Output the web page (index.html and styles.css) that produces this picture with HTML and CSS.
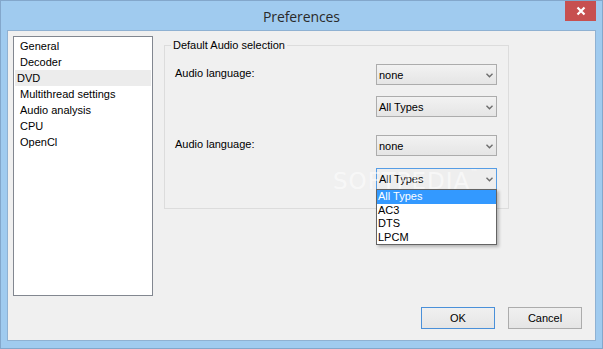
FILE: index.html
```html
<!DOCTYPE html>
<html>
<head>
<meta charset="utf-8">
<link rel="stylesheet" href="styles.css">
</head>
<body>
<div class="window">
  <div class="titlebar">
    <div class="title">Preferences</div>
    <div class="close">
      <svg width="10" height="10" viewBox="0 0 10 10"><path d="M1.5 1.5 L8.5 8.5 M8.5 1.5 L1.5 8.5" stroke="#fff" stroke-width="2.2" fill="none"/></svg>
    </div>
  </div>
  <div class="client">
    <div class="main">
      <ul class="nav">
        <li>General</li>
        <li>Decoder</li>
        <li class="selected">DVD</li>
        <li>Multithread settings</li>
        <li>Audio analysis</li>
        <li>CPU</li>
        <li>OpenCl</li>
      </ul>
      <fieldset class="group">
        <legend>Default Audio selection</legend>
        <div class="row r1">
          <span class="label">Audio language:</span>
          <div class="select"><span>none</span><svg class="chev" width="7" height="5" viewBox="0 0 7 5"><path d="M0.5 0.8 L3.5 3.8 L6.5 0.8" stroke="#6d6d6d" stroke-width="1.4" fill="none"/></svg></div>
        </div>
        <div class="row r2">
          <span class="label"></span>
          <div class="select"><span>All Types</span><svg class="chev" width="7" height="5" viewBox="0 0 7 5"><path d="M0.5 0.8 L3.5 3.8 L6.5 0.8" stroke="#6d6d6d" stroke-width="1.4" fill="none"/></svg></div>
        </div>
        <div class="row r3">
          <span class="label">Audio language:</span>
          <div class="select"><span>none</span><svg class="chev" width="7" height="5" viewBox="0 0 7 5"><path d="M0.5 0.8 L3.5 3.8 L6.5 0.8" stroke="#6d6d6d" stroke-width="1.4" fill="none"/></svg></div>
        </div>
        <div class="row r4">
          <span class="label"></span>
          <div class="select open"><span>All Types</span><svg class="chev" width="7" height="5" viewBox="0 0 7 5"><path d="M0.5 0.8 L3.5 3.8 L6.5 0.8" stroke="#6d6d6d" stroke-width="1.4" fill="none"/></svg>
            <ul class="dropdown">
              <li class="hl">All Types</li>
              <li>AC3</li>
              <li>DTS</li>
              <li>LPCM</li>
            </ul>
          </div>
        </div>
      </fieldset>
    </div>
    <div class="buttons">
      <button class="btn default">OK</button>
      <button class="btn">Cancel</button>
    </div>
    <div class="watermark">SOFTPEDIA<sup>™</sup></div>
  </div>
</div>
</body>
</html>
```

FILE: styles.css
```css
* { box-sizing: border-box; }
html, body { margin: 0; padding: 0; }
body {
  width: 603px;
  height: 349px;
  overflow: hidden;
  font-family: "Liberation Sans", Arial, sans-serif;
  font-size: 11px;
  color: #000;
}
.window {
  width: 603px;
  height: 349px;
  background: #a0cbef;
  border: 1px solid #83a7cb;
  padding: 0 6px 7px 6px;
  display: flex;
  flex-direction: column;
}
.titlebar {
  height: 29px;
  flex: none;
  display: grid;
  grid-template-columns: 1fr auto 1fr;
}
.title {
  grid-column: 2;
  align-self: center;
  font-family: "Open Sans", "Noto Sans", sans-serif;
  font-size: 14px;
  color: #2a2a2a;
  padding-top: 1px;
  letter-spacing: -0.1px;
}
.close {
  grid-column: 3;
  justify-self: end;
  align-self: start;
  width: 31px;
  height: 20px;
  background: #c75050;
  display: flex;
  align-items: center;
  justify-content: center;
}
.client {
  flex: 1;
  background: #f0f0f0;
  border: 1px solid #8fb1d2;
  display: flex;
  flex-direction: column;
  position: relative;
  overflow: hidden;
}
.main {
  flex: 1;
  display: flex;
  align-items: flex-start;
  padding: 5px 0 0 5px;
}
.nav {
  list-style: none;
  margin: 0;
  padding: 1px 0 0 0;
  width: 140px;
  height: 260px;
  background: #fff;
  border: 1px solid #828790;
  flex: none;
}
.nav li {
  height: 16px;
  line-height: 16px;
  padding-left: 5px;
  margin: 0 1px;
  white-space: nowrap;
}
.nav li.selected {
  background: #ececec;
  padding-left: 2px;
}
.group {
  margin: 3px 0 0 11px;
  width: 345px;
  height: 170px;
  border: 1px solid #dcdcdc;
  padding: 0 11px 0 10px;
  min-width: 0;
}
.group legend {
  padding: 0 2px;
  margin-left: -4px;
  line-height: 13px;
  font-size: 11px;
}
.row {
  display: flex;
  justify-content: space-between;
  align-items: flex-start;
}
.label {
  padding-top: 3px;
  line-height: 13px;
}
.r1 { margin-top: 12px; }
.r2 { margin-top: 11px; }
.r3 { margin-top: 18px; }
.r4 { margin-top: 12px; }
.select {
  position: relative;
  width: 121px;
  height: 21px;
  border: 1px solid #acacac;
  background: linear-gradient(#f2f2f2, #e5e5e5);
  display: flex;
  align-items: center;
  justify-content: space-between;
  padding: 0 3px 0 2px;
}
.select span { line-height: 13px; padding-top: 1px; }
.select .chev { margin-top: 1px; }
.select.open {
  height: 22px;
  border-color: #569de5;
  background: #eeeeee;
}
.dropdown {
  position: absolute;
  left: -1px;
  top: 20px;
  width: 121px;
  list-style: none;
  margin: 0;
  padding: 0;
  background: #fff;
  border: 1px solid #646464;
  box-shadow: 2px 2px 3px rgba(0,0,0,0.25);
  z-index: 5;
}
.dropdown li {
  height: 13.5px;
  line-height: 13px;
  padding-left: 1px;
}
.dropdown li.hl {
  background: #3399ff;
  color: #fff;
}
.buttons {
  flex: none;
  display: flex;
  justify-content: flex-end;
  gap: 13px;
  padding: 0 13px 11px 0;
}
.btn {
  width: 74px;
  height: 22px;
  border: 1px solid #acacac;
  background: linear-gradient(#f0f0f0, #e5e5e5);
  font-family: "Liberation Sans", Arial, sans-serif;
  font-size: 11px;
  color: #000;
  padding: 0;
}
.btn.default {
  border-color: #4a90d9;
}
.watermark {
  position: absolute;
  left: 325px;
  top: 137px;
  font-family: "DejaVu Sans", sans-serif;
  font-size: 23px;
  letter-spacing: 1px;
  color: rgba(255,255,255,0.55);
  pointer-events: none;
  z-index: 2;
}
.watermark sup { font-size: 8px; vertical-align: top; }
```
